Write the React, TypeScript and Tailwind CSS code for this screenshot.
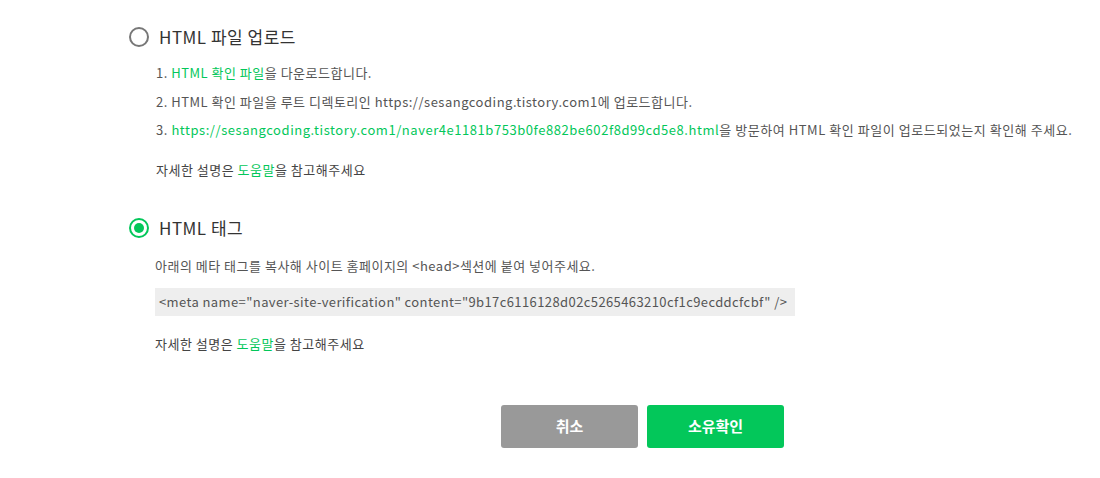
import React from 'react';

const font = { fontFamily: '"Noto Sans CJK KR", "Noto Sans", sans-serif' };

function Radio({ checked }: { checked?: boolean }) {
  if (checked) {
    return (
      <span className="flex h-[20px] w-[20px] items-center justify-center rounded-full border-2 border-[#03c75a]">
        <span className="h-[10px] w-[10px] rounded-full bg-[#03c75a]" />
      </span>
    );
  }
  return <span className="h-[20px] w-[20px] rounded-full border-2 border-[#777]" />;
}

function HelpLine() {
  return (
    <p className="text-[13px] leading-[20px] text-[#444]">
      자세한 설명은 <span className="text-[#03c75a]">도움말</span>을 참고해주세요
    </p>
  );
}

export default function App() {
  return (
    <div className="h-[478px] w-[1100px] bg-white tracking-[0.5px]" style={font}>
      <div className="pl-[129px] pt-[27px]">
        {/* File upload option */}
        <div className="flex items-center gap-[10px]">
          <Radio />
          <span className="text-[17px] leading-[20px] text-[#333]">HTML 파일 업로드</span>
        </div>
        <div className="pl-[27px] pt-[16px] text-[13px] leading-[20px] text-[#555]">
          <p>
            1. <span className="text-[#03c75a]">HTML 확인 파일</span>을 다운로드합니다.
          </p>
          <p className="mt-[8.5px]">2. HTML 확인 파일을 루트 디렉토리인 https://sesangcoding.tistory.com1에 업로드합니다.</p>
          <p className="mt-[8.5px] tracking-[0.55px]">
            3.{' '}
            <span className="text-[#03c75a]">
              https://sesangcoding.tistory.com1/naver4e1181b753b0fe882be602f8d99cd5e8.html
            </span>
            을 방문하여 HTML 확인 파일이 업로드되었는지 확인해 주세요.
          </p>
          <div className="mt-[20px]">
            <HelpLine />
          </div>
        </div>

        {/* Meta tag option */}
        <div className="mt-[38px] flex items-center gap-[10px]">
          <Radio checked />
          <span className="text-[17px] leading-[20px] text-[#333]">HTML 태그</span>
        </div>
        <div className="pl-[26px] pt-[18px] text-[13px] leading-[20px] text-[#555]">
          <p>아래의 메타 태그를 복사해 사이트 홈페이지의 &lt;head&gt;섹션에 붙여 넣어주세요.</p>
          <div className="mt-[12px] flex h-[28px] w-[640px] items-center overflow-hidden whitespace-nowrap bg-[#eee] pl-[4px] text-[13px] tracking-[0.4px] text-[#555]">
            &lt;meta name="naver-site-verification" content="9b17c6116128d02c5265463210cf1c9ecddcfcbf" /&gt;
          </div>
          <div className="mt-[18px]">
            <HelpLine />
          </div>
        </div>
      </div>

      {/* Actions */}
      <div className="mt-[51px] flex gap-[9px] pl-[501px] tracking-normal">
        <button className="h-[43px] w-[137px] rounded-[3px] bg-[#999] text-[15px] font-bold text-white">취소</button>
        <button className="h-[43px] w-[137px] rounded-[3px] bg-[#03c75a] text-[15px] font-bold text-white">소유확인</button>
      </div>
    </div>
  );
}
